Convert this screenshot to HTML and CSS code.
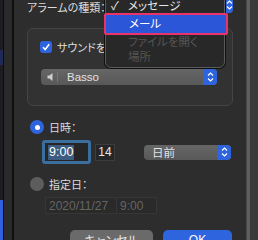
FILE: index.html
```html
<!DOCTYPE html>
<html lang="ja">
<head>
    <meta charset="UTF-8">
    <title>アラーム</title>
    <link rel="stylesheet" href="styles.css">
</head>
<body>
    <div class="desk">
        <div class="edge">
            <span class="edge-navy"></span>
            <span class="edge-blue"></span>
        </div>
        <div class="pane"></div>

        <div class="dialog">
            <div class="type-row">
                <span class="label">アラームの種類：</span>
                <div class="popup type-popup">
                    <span class="stepper"><svg width="7" height="12" viewBox="0 0 7 12"><path d="M1 4.5 3.5 2 6 4.5M1 7.5 3.5 10 6 7.5" fill="none" stroke="#fff" stroke-width="1.2"/></svg></span>
                </div>
            </div>

            <div class="group">
                <div class="check-row">
                    <span class="checkbox"><svg width="10" height="10" viewBox="0 0 10 10"><path d="M2 5.2 4.2 7.5 8.2 2.3" fill="none" stroke="#fff" stroke-width="1.6"/></svg></span>
                    <span class="label">サウンドを</span>
                </div>
                <div class="popup sound-popup">
                    <span class="speaker"><svg width="8" height="10" viewBox="0 0 8 10"><path d="M0.5 3.5h2l3-2.5v8l-3-2.5h-2z" fill="#cfcfcf"/></svg></span>
                    <span class="sep"></span>
                    <span class="popup-text">Basso</span>
                    <span class="stepper"><svg width="7" height="12" viewBox="0 0 7 12"><path d="M1 4.5 3.5 2 6 4.5M1 7.5 3.5 10 6 7.5" fill="none" stroke="#fff" stroke-width="1.2"/></svg></span>
                </div>
            </div>

            <div class="radio-row">
                <span class="radio on"></span>
                <span class="label">日時：</span>
            </div>
            <div class="time-row">
                <div class="field focus"><span class="sel">9:00</span></div>
                <div class="field small">14</div>
                <div class="popup days-popup">
                    <span class="popup-text">日前</span>
                    <span class="stepper"><svg width="7" height="12" viewBox="0 0 7 12"><path d="M1 4.5 3.5 2 6 4.5M1 7.5 3.5 10 6 7.5" fill="none" stroke="#fff" stroke-width="1.2"/></svg></span>
                </div>
            </div>

            <div class="radio-row off">
                <span class="radio"></span>
                <span class="label">指定日：</span>
            </div>
            <div class="date-row">
                <div class="field dim date">2020/11/27</div>
                <div class="field dim hour">9:00</div>
            </div>

            <div class="buttons">
                <button class="btn">キャンセル</button>
                <button class="btn primary">OK</button>
            </div>

            <!-- open popup menu -->
            <div class="menu">
                <div class="item first"><span class="tick">✓</span>メッセージ</div>
                <div class="item active">メール</div>
                <div class="item disabled">ファイルを開く</div>
                <div class="item disabled">場所</div>
            </div>
        </div>

        <div class="rail"></div>
        <div class="far"></div>
    </div>
</body>
</html>
```

FILE: styles.css
```css
* {
    margin: 0;
    padding: 0;
    box-sizing: border-box;
}

body {
    width: 258px;
    height: 240px;
    overflow: hidden;
    background: #2b2b2b;
    font-family: "Liberation Sans", "Noto Sans CJK JP", sans-serif;
    font-size: 11px;
    color: #dedede;
    font-feature-settings: "palt";
}

.desk {
    display: flex;
    height: 240px;
}

.edge {
    width: 3px;
    background: #1d1d21;
    border-right: 1px solid #0c0c0c;
    display: flex;
    flex-direction: column;
    box-sizing: content-box;
}

.edge-navy {
    height: 15px;
    margin-top: 50px;
    background: #1f2a58;
}

.edge-blue {
    height: 40px;
    margin-top: auto;
    background: #2f60de;
}

.pane {
    width: 8px;
    background: #2a2a2a;
    border-right: 2px solid #0f0f0f;
    box-sizing: content-box;
}

.dialog {
    position: relative;
    width: 232px;
    background: #2d2d2d;
    padding: 0 13px;
}

.label {
    color: #dcdcdc;
    white-space: nowrap;
    font-size: 11px;
}

/* alarm type */
.type-row {
    display: flex;
    justify-content: space-between;
    align-items: center;
    height: 14px;
}

.popup {
    display: flex;
    align-items: center;
    height: 16px;
    border-radius: 4px;
    background: linear-gradient(#666, #585858);
    overflow: hidden;
}

.type-popup {
    width: 92px;
    margin-top: -4px;
    justify-content: flex-end;
}

.stepper {
    width: 14px;
    height: 100%;
    margin-left: auto;
    background: #2f64df;
    display: flex;
    align-items: center;
    justify-content: center;
}

.type-popup .stepper {
    width: 7px;
}

/* sound group */
.group {
    margin-top: 14px;
    height: 78px;
    border: 1px solid #444;
    border-radius: 6px;
    background: #323232;
    padding: 12px 15px 0 12px;
}

.check-row {
    display: flex;
    align-items: center;
    gap: 5px;
    height: 12px;
}

.checkbox {
    width: 12px;
    height: 12px;
    border-radius: 3px;
    background: #2f64df;
    display: flex;
    align-items: center;
    justify-content: center;
}

.sound-popup {
    margin-top: 16px;
    margin-left: 1px;
    width: 176px;
}

.speaker {
    width: 14px;
    padding-left: 6px;
    display: flex;
}

.sep {
    width: 1px;
    height: 10px;
    margin-left: 2px;
    background: #777;
}

.popup-text {
    margin-left: 9px;
    color: #e2e2e2;
    font-size: 11.5px;
}

/* date & time */
.radio-row {
    display: flex;
    align-items: center;
    gap: 5px;
    margin-top: 14px;
    padding-left: 3px;
    height: 14px;
}

.radio {
    width: 14px;
    height: 14px;
    border-radius: 50%;
    background: #5d5d5d;
    display: flex;
    align-items: center;
    justify-content: center;
}

.radio.on {
    background: #2f64df;
}

.radio.on::after {
    content: "";
    width: 5px;
    height: 5px;
    border-radius: 50%;
    background: #fff;
}

.time-row {
    display: flex;
    align-items: center;
    margin-top: 6px;
    padding-left: 15px;
    height: 24px;
}

.field {
    height: 17px;
    display: flex;
    align-items: center;
    background: #262626;
    border: 1px solid #3d3d3d;
    color: #e8e8e8;
    font-size: 12px;
}

.field.focus {
    width: 49px;
    height: 24px;
    border: 3px solid #3a6e9f;
    border-radius: 3px;
    padding-left: 3px;
}

.sel {
    background: #3d5d80;
    color: #fff;
    padding: 1px 1px;
    line-height: 13px;
    font-size: 12.5px;
}

.field.small {
    width: 20px;
    margin-left: 4px;
    justify-content: center;
}

.days-popup {
    width: 87px;
    height: 15px;
    margin-left: 29px;
}

.days-popup .popup-text {
    margin-left: 8px;
}

.radio-row.off {
    margin-top: 13px;
}

.date-row {
    display: flex;
    margin-top: 6px;
    padding-left: 18px;
}

.field.dim {
    color: #656565;
    background: #2a2a2a;
    border-color: #363636;
    padding-left: 3px;
}

.date {
    width: 72px;
}

.hour {
    width: 40px;
    border-left: none;
}

/* buttons */
.buttons {
    display: flex;
    justify-content: flex-end;
    gap: 10px;
    margin-top: 16px;
    padding-right: 1px;
}

.btn {
    height: 22px;
    border: none;
    border-radius: 5px;
    font-family: inherit;
    font-size: 12px;
    color: #e6e6e6;
    background: #6a6a6a;
    width: 83px;
    padding-bottom: 3px;
    font-feature-settings: "palt";
}

.btn.primary {
    width: 69px;
    background: #2f64df;
    color: #fff;
}

/* open menu over the dialog */
.menu {
    position: absolute;
    left: 91px;
    top: -6px;
    width: 120px;
    height: 74px;
    padding-top: 4px;
    background: #282828;
    border: 1px solid #5a5a5a;
    border-radius: 0 0 6px 6px;
    box-shadow: 0 0 0 1px #111;
}

.item {
    position: relative;
    height: 15px;
    line-height: 15px;
    padding-left: 22px;
    color: #e6e6e6;
    font-size: 11.5px;
}

.item.first {
    height: 14px;
    line-height: 14px;
}

.tick {
    position: absolute;
    left: 5px;
}

.item.active {
    height: 22px;
    line-height: 18px;
    margin: 0 -4px 0 -2px;
    padding-left: 23px;
    background: #2b56d8;
    border: 2px solid #e8336b;
    border-radius: 2px;
    color: #fff;
}

.item.disabled {
    color: #555;
}

.rail {
    width: 4px;
    background: #5e5e5e;
    border-left: 1px solid #474747;
}

.far {
    flex: 1;
    background: #3b3b3b;
}
```
